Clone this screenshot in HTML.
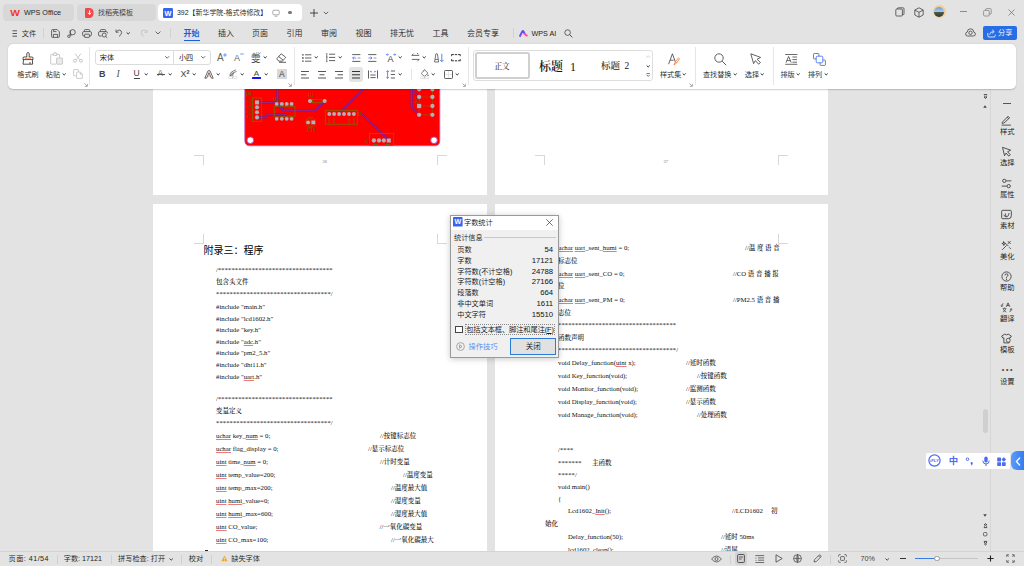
<!DOCTYPE html>
<html lang="zh-CN">
<head>
<meta charset="utf-8">
<title>WPS</title>
<style>
*{box-sizing:border-box;margin:0;padding:0}
html,body{width:1024px;height:566px;overflow:hidden}
body{position:relative;background:#e3e3e3;font-family:"Liberation Sans","Noto Sans CJK SC",sans-serif;font-size:8px;color:#222;font-weight:350}
.abs{position:absolute}
.t{position:absolute;white-space:nowrap;line-height:1}
svg{position:absolute;overflow:visible}
/* top */
#topbar{position:absolute;left:0;top:0;width:1024px;height:44px;background:#e3e3e3}
.tab{position:absolute;top:4px;height:17px;border-radius:4px;background:#d8d8d8}
.tab.active{background:#fff}
.menu{position:absolute;top:28.5px;font-size:8px;color:#222;line-height:10px;white-space:nowrap}
/* ribbon */
#ribbon{position:absolute;left:8px;top:44px;width:1008px;height:45px;background:#fff;border-radius:5px;box-shadow:0 0.5px 1.5px rgba(0,0,0,.2);z-index:3}
.rsep{position:absolute;top:3px;width:1px;height:38px;background:#e6e6e6}
.rl{position:absolute;font-size:7.1px;line-height:9px;color:#222;white-space:nowrap}
/* doc */
#doc{position:absolute;left:0;top:89px;width:990px;height:462px;background:#e3e3e3;overflow:hidden}
.page{position:absolute;background:#fff}
.code{position:absolute;white-space:pre;font-family:"Liberation Serif","Noto Serif CJK SC",serif;font-size:6.75px;line-height:8px;color:#111}
.code i{font-style:normal;text-decoration:underline;text-decoration-color:rgba(226,50,50,.65);text-decoration-thickness:0.8px;text-underline-offset:0.9px;text-decoration-skip-ink:none}
.cn{font-family:"Noto Serif CJK SC","Liberation Serif",serif;font-size:6.5px;font-weight:500;color:#000}
/* sidebar */
#side{position:absolute;left:990px;top:89px;width:34px;height:462px;background:#e3e3e3;border-left:1px solid #d6d6d6}
.sl{position:absolute;left:-0.8px;width:34px;text-align:center;font-size:7.3px;line-height:9px;color:#111}
/* status */
#status{position:absolute;left:0;top:551px;width:1024px;height:15px;background:#e3e3e3;border-top:1px solid #d4d4d4}
.st{position:absolute;top:2.2px;font-size:7.2px;line-height:9px;color:#222;white-space:nowrap}
/* dialog */
#dlg{z-index:5;position:absolute;left:450.2px;top:214.5px;width:109px;height:143.5px;background:#f0f0f0;border:1px solid #9a9a9a;box-shadow:0 1px 6px rgba(0,0,0,.22)}
.dr{position:absolute;left:6px;width:96px;font-size:7.2px;line-height:10px;color:#111}
.dr b{position:absolute;right:0;font-weight:normal;font-size:7.75px}
</style>
</head>
<body>
<div id="topbar">
  <!-- tabs -->
  <div class="tab" style="left:3px;width:71px"></div>
  <svg style="left:10px;top:8.5px" width="10" height="8" viewBox="0 0 10 8"><text x="5" y="7.4" font-size="9.6" font-weight="bold" fill="#f0392b" text-anchor="middle" font-family="Liberation Sans,sans-serif" textLength="9.6" lengthAdjust="spacingAndGlyphs">W</text></svg>
  <div class="t" style="left:24px;top:8.8px;font-size:7.2px;color:#222">WPS Office</div>

  <div class="tab" style="left:77px;width:79px"></div>
  <svg style="left:85px;top:8px" width="9" height="10" viewBox="0 0 9 10"><path d="M0 1.2 Q0 0 1.2 0 L4 0 Q8.6 0 8.6 5 Q8.6 10 4 10 L1.2 10 Q0 10 0 8.8Z" fill="#f04848"/><path d="M4.6 2.6 L4.6 5.6 M3.2 5 L4.6 6.6 L6 5" stroke="#fff" stroke-width="1" fill="none" stroke-linecap="round"/></svg>
  <div class="t" style="left:98px;top:9px;font-size:7px;color:#333">找稻壳模板</div>

  <div class="tab active" style="left:158px;width:144px"></div>
  <svg style="left:163px;top:8px" width="10" height="10" viewBox="0 0 10 10"><rect width="10" height="10" rx="1.2" fill="#3a63f0"/><text x="5" y="7.7" font-size="7.4" font-weight="bold" fill="#fff" text-anchor="middle" font-family="Liberation Sans,sans-serif">W</text></svg>
  <div class="t" style="left:177px;top:9.6px;font-size:6.95px;color:#222">392【新华学院-格式待修改】</div>
  <svg style="left:272px;top:9px" width="8" height="8" viewBox="0 0 8 8"><rect x="0.8" y="1.2" width="6.4" height="4.6" rx="1" fill="none" stroke="#888" stroke-width="0.7"/><path d="M2.6 7.2 H5.4" stroke="#888" stroke-width="0.7"/></svg>
  <div class="abs" style="left:288.4px;top:11px;width:3.4px;height:3.4px;border-radius:50%;background:#777"></div>
  <svg style="left:309px;top:8px" width="10" height="10" viewBox="0 0 10 10"><path d="M5 1 V9 M1 5 H9" stroke="#333" stroke-width="0.9" fill="none"/></svg>
  <svg style="left:323px;top:10.5px" width="6" height="4" viewBox="0 0 6 4"><path d="M0.8 0.8 L3 3 L5.2 0.8" stroke="#444" stroke-width="0.8" fill="none"/></svg>

  <!-- window controls -->
  <svg style="left:895px;top:7px" width="10" height="10" viewBox="0 0 10 10"><rect x="0.8" y="2" width="6.6" height="7" rx="1" fill="none" stroke="#444" stroke-width="0.8"/><path d="M2.4 2 V1.6 Q2.4 0.8 3.2 0.8 H8 Q9 0.8 9 1.8 V7 Q9 7.6 8.2 7.6 H7.4" fill="none" stroke="#444" stroke-width="0.8"/></svg>
  <svg style="left:914px;top:6.5px" width="10" height="11" viewBox="0 0 10 11"><path d="M5 0.8 L9.2 3 V8 L5 10.2 L0.8 8 V3Z M0.8 3 L5 5.3 L9.2 3 M5 5.3 V10.2" fill="none" stroke="#444" stroke-width="0.8" stroke-linejoin="round"/></svg>
  <div class="abs" style="left:932.5px;top:5px;width:13px;height:13px;border-radius:50%;background:#f0cf9a"></div>
  <div class="abs" style="left:934px;top:6.5px;width:10px;height:10px;border-radius:50%;background:linear-gradient(#6f9fd8 0%,#a9c6e8 45%,#4a5a48 55%,#2f3a30 100%)"></div>
  <div class="abs" style="left:960.3px;top:11.2px;width:7px;height:0.9px;background:#8c8c8c"></div>
  <svg style="left:983px;top:7.5px" width="9" height="9" viewBox="0 0 9 9"><rect x="0.6" y="2.4" width="5.6" height="5.6" rx="1" fill="none" stroke="#777" stroke-width="0.7"/><path d="M2.6 2.4 V1.6 Q2.6 0.6 3.6 0.6 H7.2 Q8.2 0.6 8.2 1.6 V5.2 Q8.2 6.2 7.2 6.2 H6.2" fill="none" stroke="#777" stroke-width="0.7"/></svg>
  <svg style="left:1008px;top:8.5px" width="7" height="7" viewBox="0 0 7 7"><path d="M0.5 0.5 L6.5 6.5 M6.5 0.5 L0.5 6.5" stroke="#666" stroke-width="0.7"/></svg>

  <!-- menu row -->
  <svg style="left:12px;top:30px" width="6" height="7" viewBox="0 0 6 7"><path d="M0.5 0.8 H5 M0.5 3.5 H5 M0.5 6.2 H5" stroke="#333" stroke-width="0.8"/></svg>
  <div class="menu" style="left:21.8px;font-size:7.2px">文件</div>
  <div class="abs" style="left:43px;top:28px;width:1px;height:10px;background:#d2d2d2"></div>
  <!-- save -->
  <svg style="left:51px;top:28.5px" width="9" height="9" viewBox="0 0 9 9"><path d="M0.6 1.4 Q0.6 0.6 1.4 0.6 H6.2 L8.4 2.8 V7.6 Q8.4 8.4 7.6 8.4 H1.4 Q0.6 8.4 0.6 7.6Z" fill="none" stroke="#444" stroke-width="0.8"/><path d="M2.4 8.2 V5.4 H6.6 V8.2 M2.6 0.8 V2.6 H5.4" fill="none" stroke="#444" stroke-width="0.8"/></svg>
  <!-- key-like -->
  <svg style="left:67px;top:28.5px" width="9" height="9" viewBox="0 0 9 9"><circle cx="5.7" cy="3.2" r="2.6" fill="none" stroke="#444" stroke-width="0.8"/><path d="M3.2 1.2 V7 Q3.2 8.5 1.9 8.5 Q0.6 8.5 0.6 7.3 Q0.6 6.1 1.9 6.1 H4.6" fill="none" stroke="#444" stroke-width="0.8"/></svg>
  <!-- print -->
  <svg style="left:82px;top:28.5px" width="10" height="9" viewBox="0 0 10 9"><path d="M2.4 2.6 V1.4 Q2.4 0.6 3.2 0.6 H6.8 Q7.6 0.6 7.6 1.4 V2.6" fill="none" stroke="#444" stroke-width="0.8"/><rect x="0.6" y="2.6" width="8.8" height="4.4" rx="1.2" fill="none" stroke="#444" stroke-width="0.8"/><rect x="2.6" y="5.2" width="4.8" height="3.2" rx="0.5" fill="#e3e3e3" stroke="#444" stroke-width="0.8"/></svg>
  <!-- preview -->
  <svg style="left:98px;top:28.5px" width="10" height="9" viewBox="0 0 10 9"><path d="M2.4 2.6 V1.4 Q2.4 0.6 3.2 0.6 H6.8 Q7.6 0.6 7.6 1.4 V2.6" fill="none" stroke="#444" stroke-width="0.8"/><path d="M3.6 7 H1.6 Q0.6 7 0.6 6 V3.8 Q0.6 2.6 1.8 2.6 H8.2 Q9.4 2.6 9.4 3.8 V4.4" fill="none" stroke="#444" stroke-width="0.8"/><circle cx="6.2" cy="6" r="2" fill="none" stroke="#444" stroke-width="0.8"/><path d="M7.7 7.5 L9.2 8.8" stroke="#444" stroke-width="0.8"/></svg>
  <!-- undo -->
  <svg style="left:115px;top:29px" width="8" height="8" viewBox="0 0 8 8"><path d="M1 0.6 V3.2 H3.6" fill="none" stroke="#444" stroke-width="0.8"/><path d="M1.2 3 Q2.6 0.9 4.6 1.1 Q6.6 1.4 6.6 3.6 Q6.6 5.6 4 7.4" fill="none" stroke="#444" stroke-width="0.8"/></svg>
  <svg style="left:126.3px;top:32px" width="4.4" height="3" viewBox="0 0 4.4 3"><path d="M0.95 0.75 L2.2 2 L3.45 0.75" stroke="#333" stroke-width="1" fill="none" stroke-linecap="round" stroke-linejoin="round"/></svg>
  <!-- redo (disabled) -->
  <svg style="left:140px;top:29px" width="8" height="8" viewBox="0 0 8 8"><path d="M7 0.8 V3.4 H4.4" fill="none" stroke="#c2c2c2" stroke-width="0.8"/><path d="M6.8 3.2 Q5.4 0.9 3.4 1.1 Q1.2 1.4 1.2 3.6 Q1.2 5.6 3.8 7.4" fill="none" stroke="#bbb" stroke-width="0.8"/></svg>
  <svg style="left:155px;top:31px" width="6" height="4" viewBox="0 0 6 4"><path d="M0.6 0.6 L3 3 L5.4 0.6" stroke="#444" stroke-width="0.8" fill="none"/></svg>
  <div class="abs" style="left:170px;top:28px;width:1px;height:10px;background:#d2d2d2"></div>

  <div class="menu" style="left:183.5px;color:#1d5fd6;font-weight:bold">开始</div>
  <div class="abs" style="left:184px;top:39.5px;width:16px;height:1.5px;background:#1d5fd6"></div>
  <div class="menu" style="left:218px">插入</div>
  <div class="menu" style="left:252px">页面</div>
  <div class="menu" style="left:286.5px">引用</div>
  <div class="menu" style="left:321px">审阅</div>
  <div class="menu" style="left:355.5px">视图</div>
  <div class="menu" style="left:390px">排无忧</div>
  <div class="menu" style="left:432.5px">工具</div>
  <div class="menu" style="left:467px">会员专享</div>
  <div class="abs" style="left:513px;top:28px;width:1px;height:10px;background:#d2d2d2"></div>
  <svg style="left:519.3px;top:29.6px" width="9" height="7" viewBox="0 0 9 7"><path d="M1 6 L3.3 1.4 Q3.9 0.4 4.5 1.4 L5.6 3.4" fill="none" stroke="#6a4af2" stroke-width="1.9" stroke-linecap="round" stroke-linejoin="round"/><path d="M5.2 3.8 L7.8 5.6" stroke="#f850a8" stroke-width="1.9" stroke-linecap="round"/></svg>
  <div class="menu" style="left:531.5px;font-size:7.2px">WPS AI</div>
  <svg style="left:564px;top:28.5px" width="9" height="9" viewBox="0 0 9 9"><circle cx="3.6" cy="3.6" r="2.8" fill="none" stroke="#444" stroke-width="0.8"/><path d="M5.8 5.8 L8.4 8.4" stroke="#444" stroke-width="0.9"/></svg>

  <!-- cloud + share -->
  <svg style="left:965px;top:28px" width="11" height="9" viewBox="0 0 11 9"><path d="M2.6 8 Q0.6 8 0.6 6 Q0.6 4.4 2.2 4.1 Q2.4 0.8 5.5 0.8 Q8.6 0.8 8.8 4.1 Q10.4 4.4 10.4 6 Q10.4 8 8.4 8Z" fill="none" stroke="#444" stroke-width="0.8"/><circle cx="5.5" cy="4.8" r="1.7" fill="none" stroke="#444" stroke-width="0.8"/></svg>
  <div class="abs" style="left:983px;top:25.5px;width:33.5px;height:14.5px;border-radius:2px;background:#266de6"></div>
  <svg style="left:987px;top:28.5px" width="9" height="9" viewBox="0 0 9 9"><path d="M0.8 4 V6.8 Q0.8 8 2 8 H7 Q8.2 8 8.2 6.8 V5.6" fill="none" stroke="#fff" stroke-width="0.8"/><path d="M2.6 5.8 Q3 2.6 6.6 2.6 M5.2 0.8 L7.2 2.6 L5.2 4.4" fill="none" stroke="#fff" stroke-width="0.8"/></svg>
  <div class="t" style="left:998px;top:29px;font-size:7.2px;color:#fff">分享</div>
</div>
<div id="ribbon">
<svg style="left:14px;top:8px" width="12" height="13" viewBox="0 0 12 13"><path d="M4.8 5 V1.6 Q4.8 0.6 6 0.6 Q7.2 0.6 7.2 1.6 V5 H10 Q11 5 11 6 V7.6 H1 V6 Q1 5 2 5Z" fill="none" stroke="#333" stroke-width="0.85" stroke-linejoin="round"/><path d="M1.6 7.6 L1 12.2 H10.6 L10.4 7.6 M8 12 V10" fill="none" stroke="#333" stroke-width="0.85" stroke-linejoin="round"/><path d="M3 6.3 H9" stroke="#f07030" stroke-width="0.8"/></svg>
<div class="rl" style="left:9.3px;top:26.5px">格式刷</div>
<svg style="left:42px;top:8px" width="13" height="13" viewBox="0 0 13 13"><path d="M3.2 2.4 H1.2 Q0.7 2.4 0.7 2.9 V11.6 Q0.7 12.1 1.2 12.1 H6 M7 2.4 H9 Q9.5 2.4 9.5 2.9 V5.4" fill="none" stroke="#c0c0c0" stroke-width="0.85"/><path d="M3.2 3.4 V1.6 H4.2 V0.7 H6 V1.6 H7 V3.4Z" fill="none" stroke="#c0c0c0" stroke-width="0.85" stroke-linejoin="round"/><rect x="6.6" y="6" width="5.8" height="6.2" rx="0.4" fill="#ececec" stroke="#c0c0c0" stroke-width="0.85"/></svg>
<div class="rl" style="left:37.8px;top:26.5px">粘贴</div>
<svg style="left:53.599999999999994px;top:29.3px" width="4.4" height="3" viewBox="0 0 4.4 3"><path d="M0.95 0.75 L2.2 2 L3.45 0.75" stroke="#333" stroke-width="1" fill="none" stroke-linecap="round" stroke-linejoin="round"/></svg>
<svg style="left:65px;top:8.5px" width="10" height="10" viewBox="0 0 10 10"><path d="M2 0.6 L6.8 6.8 M8 0.6 L3.2 6.8" stroke="#bdbdbd" stroke-width="0.8" fill="none"/><circle cx="2" cy="7.8" r="1.5" fill="none" stroke="#bdbdbd" stroke-width="0.8"/><circle cx="8" cy="7.8" r="1.5" fill="none" stroke="#bdbdbd" stroke-width="0.8"/></svg>
<svg style="left:65px;top:25px" width="10" height="10" viewBox="0 0 10 10"><path d="M3.2 6.8 H1 Q0.6 6.8 0.6 6.4 V1 Q0.6 0.6 1 0.6 H5 Q5.4 0.6 5.4 1 V2.6" fill="none" stroke="#c0c0c0" stroke-width="0.8"/><path d="M3.6 3.4 Q3.6 3 4 3 H7.2 L9.4 5.2 V9 Q9.4 9.4 9 9.4 H4 Q3.6 9.4 3.6 9Z M7.2 3 V5.2 H9.4" fill="none" stroke="#c0c0c0" stroke-width="0.8" stroke-linejoin="round"/></svg>
<svg style="left:76.2px;top:39.2px" width="4" height="4" viewBox="0 0 4 4"><path d="M0.4 0.4 L3 3 M3.4 0.8 V3.4 H0.8" stroke="#777" stroke-width="0.6" fill="none"/></svg>
<div class="rsep" style="left:81px"></div>
<div class="abs" style="left:87px;top:6px;width:115.5px;height:14.5px;border:1px solid #dcdcdc;border-radius:3px"></div>
<div class="abs" style="left:165.3px;top:6.5px;width:1px;height:13.5px;background:#dcdcdc"></div>
<div class="rl" style="left:91.8px;top:9.5px;color:#222;font-weight:400">宋体</div>
<svg style="left:157.3px;top:12.3px" width="4.4" height="3" viewBox="0 0 4.4 3"><path d="M0.5 0.5 L2.2 2.2 L3.9 0.5" stroke="#666" stroke-width="0.95" fill="none" stroke-linecap="round" stroke-linejoin="round"/></svg>
<div class="rl" style="left:171px;top:9.5px;color:#222;font-weight:400">小四</div>
<svg style="left:192.8px;top:12.3px" width="4.4" height="3" viewBox="0 0 4.4 3"><path d="M0.5 0.5 L2.2 2.2 L3.9 0.5" stroke="#666" stroke-width="0.95" fill="none" stroke-linecap="round" stroke-linejoin="round"/></svg>
<div class="rl" style="left:209px;top:8px;font-size:10px;line-height:11px;color:#666">A</div>
<svg style="left:214.5px;top:8.5px" width="4" height="4" viewBox="0 0 4 4"><path d="M2 0.2 V3.8 M0.2 2 H3.8" stroke="#3a6df0" stroke-width="0.7"/></svg>
<div class="rl" style="left:226px;top:9px;font-size:9px;line-height:10px;color:#666">A</div>
<svg style="left:231.5px;top:9px" width="4" height="2" viewBox="0 0 4 2"><path d="M0.2 1 H3.8" stroke="#3a6df0" stroke-width="0.7"/></svg>
<div class="rl" style="left:243px;top:9.8px;font-size:9.5px;line-height:10px;color:#333">雯</div>
<div class="abs" style="left:243.5px;top:8.6px;width:8.5px;height:1.4px;background:#fff"></div>
<svg style="left:243.5px;top:7.8px" width="9" height="3" viewBox="0 0 9 3"><path d="M0.5 2.2 Q2 0.4 3.4 1.8 M4 1 H5.4 M6 0.6 Q7.4 2.4 8.6 0.8" stroke="#444" stroke-width="0.6" fill="none"/></svg>
<svg style="left:255.3px;top:12.3px" width="4.4" height="3" viewBox="0 0 4.4 3"><path d="M0.95 0.75 L2.2 2 L3.45 0.75" stroke="#333" stroke-width="1" fill="none" stroke-linecap="round" stroke-linejoin="round"/></svg>
<svg style="left:267.5px;top:8.5px" width="11" height="10" viewBox="0 0 11 10"><path d="M5.2 0.8 L9.4 4 Q9.9 4.5 9.4 5 L6.2 8.2 H3 L1 6.4 Q0.5 5.9 1 5.4Z M2.8 3.6 L7.2 7.2" fill="none" stroke="#444" stroke-width="0.85" stroke-linejoin="round"/><path d="M3 9.3 H10" stroke="#444" stroke-width="0.85"/></svg>
<div class="rl" style="left:91px;top:25px;font-size:9px;line-height:10px;font-weight:bold;color:#444">B</div>
<div class="rl" style="left:108.5px;top:25px;font-size:9.5px;line-height:10px;font-style:italic;font-family:'Liberation Serif',serif;color:#555">I</div>
<div class="rl" style="left:125.5px;top:25.2px;font-size:8.5px;line-height:9px;color:#444">U</div>
<div class="abs" style="left:125.5px;top:33.6px;width:6.5px;height:0.9px;background:#444"></div>
<svg style="left:135.8px;top:29.3px" width="4.4" height="3" viewBox="0 0 4.4 3"><path d="M0.95 0.75 L2.2 2 L3.45 0.75" stroke="#333" stroke-width="1" fill="none" stroke-linecap="round" stroke-linejoin="round"/></svg>
<div class="rl" style="left:149.5px;top:25.2px;font-size:8.5px;line-height:9px;color:#666">A</div>
<div class="abs" style="left:148.5px;top:30.2px;width:8px;height:0.8px;background:#555"></div>
<svg style="left:159.8px;top:29.3px" width="4.4" height="3" viewBox="0 0 4.4 3"><path d="M0.95 0.75 L2.2 2 L3.45 0.75" stroke="#333" stroke-width="1" fill="none" stroke-linecap="round" stroke-linejoin="round"/></svg>
<div class="rl" style="left:172.5px;top:25.2px;font-size:9px;line-height:10px;color:#444">X<span style="font-size:5.5px;position:relative;top:-3px;font-weight:bold">2</span></div>
<svg style="left:183.8px;top:29.3px" width="4.4" height="3" viewBox="0 0 4.4 3"><path d="M0.95 0.75 L2.2 2 L3.45 0.75" stroke="#333" stroke-width="1" fill="none" stroke-linecap="round" stroke-linejoin="round"/></svg>
<svg style="left:196px;top:25.5px" width="10" height="9" viewBox="0 0 10 9"><path d="M0.8 8.2 L4 0.8 H6 L9.2 8.2 H7.4 L5 2.6 L2.6 8.2Z" fill="#fff" stroke="#444" stroke-width="0.8" stroke-linejoin="round"/><path d="M4.2 6.6 L5 4.4 L5.8 6.6Z" fill="#f07030"/></svg>
<svg style="left:207.8px;top:29.3px" width="4.4" height="3" viewBox="0 0 4.4 3"><path d="M0.95 0.75 L2.2 2 L3.45 0.75" stroke="#333" stroke-width="1" fill="none" stroke-linecap="round" stroke-linejoin="round"/></svg>
<svg style="left:220px;top:25px" width="10" height="10" viewBox="0 0 10 10"><path d="M1.6 6.6 L3.4 3 L7.8 0.8 M3.6 4.6 L8.6 2.4 M2 6.8 L5.4 4.2 L4.6 6.8Z" fill="none" stroke="#555" stroke-width="0.75" stroke-linejoin="round"/><rect x="0.6" y="7.6" width="8.4" height="1.9" rx="0.4" fill="#fff" stroke="#ccc" stroke-width="0.5"/><path d="M4 9.2 L5.6 7.9" stroke="#f04040" stroke-width="0.5"/></svg>
<svg style="left:231.8px;top:29.3px" width="4.4" height="3" viewBox="0 0 4.4 3"><path d="M0.95 0.75 L2.2 2 L3.45 0.75" stroke="#333" stroke-width="1" fill="none" stroke-linecap="round" stroke-linejoin="round"/></svg>
<div class="rl" style="left:245.8px;top:24.6px;font-size:8px;line-height:9px;color:#444">A</div>
<div class="abs" style="left:244px;top:32.7px;width:9px;height:2px;background:#1414f0;border-radius:0.5px"></div>
<svg style="left:255.8px;top:29.3px" width="4.4" height="3" viewBox="0 0 4.4 3"><path d="M0.95 0.75 L2.2 2 L3.45 0.75" stroke="#333" stroke-width="1" fill="none" stroke-linecap="round" stroke-linejoin="round"/></svg>
<div class="abs" style="left:269px;top:25px;width:9.5px;height:10px;background:#d9d9d9"></div>
<div class="rl" style="left:270.9px;top:25.8px;font-size:8.5px;line-height:9px;color:#444">A</div>
<svg style="left:279.7px;top:39.2px" width="4" height="4" viewBox="0 0 4 4"><path d="M0.4 0.4 L3 3 M3.4 0.8 V3.4 H0.8" stroke="#777" stroke-width="0.6" fill="none"/></svg>
<div class="rsep" style="left:285.5px"></div>
<svg style="left:294px;top:9.7px" width="10" height="8" viewBox="0 0 10 8"><path d="M0.2 0.8 H1.6 M0.2 4 H1.6 M0.2 7.2 H1.6" stroke="#333" stroke-width="1.3"/><path d="M3 0.8 H9.4 M3 4 H9.4 M3 7.2 H9.4" stroke="#444" stroke-width="0.85"/></svg>
<svg style="left:305.8px;top:12.3px" width="4.4" height="3" viewBox="0 0 4.4 3"><path d="M0.95 0.75 L2.2 2 L3.45 0.75" stroke="#333" stroke-width="1" fill="none" stroke-linecap="round" stroke-linejoin="round"/></svg>
<svg style="left:318px;top:9.3px" width="10" height="9" viewBox="0 0 10 9"><path d="M0.8 0.4 V8.6 M0.2 1 L0.8 0.4 M0.2 4 H1.4 M0.2 8.6 H1.4" stroke="#444" stroke-width="0.7" fill="none"/><path d="M3 1.2 H9.2 M3 4.4 H9.2 M3 7.6 H9.2" stroke="#444" stroke-width="0.85"/></svg>
<svg style="left:329.8px;top:12.3px" width="4.4" height="3" viewBox="0 0 4.4 3"><path d="M0.95 0.75 L2.2 2 L3.45 0.75" stroke="#333" stroke-width="1" fill="none" stroke-linecap="round" stroke-linejoin="round"/></svg>
<svg style="left:343.8px;top:9.7px" width="9" height="8" viewBox="0 0 9 8"><path d="M0.2 0.6 H8.4 M0.2 7.4 H8.4" stroke="#444" stroke-width="0.85"/><path d="M5.6 4 H8.4" stroke="#888" stroke-width="0.85"/><path d="M0.6 4 H4.2 M2 2.6 L0.6 4 L2 5.4" stroke="#3a6df0" stroke-width="0.75" fill="none"/></svg>
<svg style="left:360px;top:9.7px" width="9" height="8" viewBox="0 0 9 8"><path d="M0.2 0.6 H8.4 M0.2 7.4 H8.4" stroke="#444" stroke-width="0.85"/><path d="M5.6 4 H8.4" stroke="#888" stroke-width="0.85"/><path d="M0.4 4 H4 M2.6 2.6 L4 4 L2.6 5.4" stroke="#3a6df0" stroke-width="0.75" fill="none"/></svg>
<div class="rl" style="left:379.6px;top:9.6px;font-size:9px;line-height:10px;color:#444">A</div>
<svg style="left:378px;top:8.6px" width="10" height="4" viewBox="0 0 10 4"><path d="M0.4 1.6 H2.8 M1.4 0.5 L0.4 1.6 L1.4 2.7 M7.2 1.6 H9.6 M8.6 0.5 L9.6 1.6 L8.6 2.7" stroke="#3a6df0" stroke-width="0.7" fill="none"/></svg>
<svg style="left:389.8px;top:12.3px" width="4.4" height="3" viewBox="0 0 4.4 3"><path d="M0.95 0.75 L2.2 2 L3.45 0.75" stroke="#333" stroke-width="1" fill="none" stroke-linecap="round" stroke-linejoin="round"/></svg>
<svg style="left:402.5px;top:9px" width="9" height="9" viewBox="0 0 9 9"><path d="M8.2 2.4 H0.8 L2.6 0.6 M0.8 6.4 H8.2 L6.4 8.2 M6 0.4 L7.4 1" stroke="#444" stroke-width="0.8" fill="none" stroke-linejoin="round"/></svg>
<svg style="left:413.8px;top:12.3px" width="4.4" height="3" viewBox="0 0 4.4 3"><path d="M0.95 0.75 L2.2 2 L3.45 0.75" stroke="#333" stroke-width="1" fill="none" stroke-linecap="round" stroke-linejoin="round"/></svg>
<svg style="left:426px;top:9.2px" width="11" height="10" viewBox="0 0 11 10"><path d="M0.6 9 H4.6 L3.6 2 Q3.6 0.6 2.6 0.6 Q1.7 0.6 1.7 2Z M1.2 6.4 H4" fill="none" stroke="#444" stroke-width="0.75" stroke-linejoin="round"/><path d="M7.8 0.8 V8.6 M6 6.8 L7.8 8.6 L9.6 6.8" fill="none" stroke="#3a6df0" stroke-width="0.85"/></svg>
<svg style="left:443px;top:9.6px" width="10" height="8" viewBox="0 0 10 8"><path d="M0.5 0.6 H9.3 M0.5 6.8 H9.3" stroke="#333" stroke-width="1" stroke-dasharray="2.4 0.9" fill="none"/><path d="M0.6 0.4 V2.2 M0.6 5 V7 M9.2 0.4 V2.2 M9.2 5 V7" stroke="#333" stroke-width="0.9"/></svg>
<div class="rsep" style="left:459.5px"></div>
<svg style="left:293px;top:26.5px" width="10" height="10" viewBox="0 0 10 10"><path d="M0 0.5 H8 M0 3.75 H5.4 M0 7.0 H8 " stroke="#444" stroke-width="0.9" fill="none"/></svg>
<svg style="left:310px;top:26.5px" width="10" height="10" viewBox="0 0 10 10"><path d="M0 0.5 H8 M1.5 3.75 H6.5 M0 7.0 H8 " stroke="#444" stroke-width="0.9" fill="none"/></svg>
<svg style="left:327px;top:26.5px" width="10" height="10" viewBox="0 0 10 10"><path d="M0 0.5 H8 M2.6 3.75 H8.0 M0 7.0 H8 " stroke="#444" stroke-width="0.9" fill="none"/></svg>
<div class="abs" style="left:341px;top:23px;width:14px;height:14.5px;border-radius:2.5px;background:#e4e4e4"></div>
<svg style="left:344px;top:26.5px" width="10" height="10" viewBox="0 0 10 10"><path d="M0 0.5 H8 M0 3.75 H8 M0 7.0 H8 " stroke="#333" stroke-width="1" fill="none"/></svg>
<svg style="left:360px;top:25.5px" width="10" height="9" viewBox="0 0 10 9"><path d="M0.5 0.4 V8.6 M9.5 0.4 V8.6" stroke="#444" stroke-width="0.85"/><path d="M2.4 5 H7.6 M2.4 7.6 H7.6" stroke="#444" stroke-width="0.85"/><path d="M2.4 1.6 H4 M3.2 0.8 L2.4 1.6 L3.2 2.4 M6 1.6 H7.6 M6.8 0.8 L7.6 1.6 L6.8 2.4" stroke="#3a6df0" stroke-width="0.65" fill="none"/></svg>
<svg style="left:378px;top:25.5px" width="10" height="9" viewBox="0 0 10 9"><path d="M1.6 0.6 V8.4 M0.4 1.8 L1.6 0.6 L2.8 1.8 M0.4 7.2 L1.6 8.4 L2.8 7.2" stroke="#3a6df0" stroke-width="0.8" fill="none"/><path d="M4.8 1 H9 M4.8 4.5 H9 M4.8 8 H9" stroke="#444" stroke-width="0.85"/></svg>
<svg style="left:389.8px;top:29.3px" width="4.4" height="3" viewBox="0 0 4.4 3"><path d="M0.95 0.75 L2.2 2 L3.45 0.75" stroke="#333" stroke-width="1" fill="none" stroke-linecap="round" stroke-linejoin="round"/></svg>
<div class="abs" style="left:403px;top:25px;width:1px;height:11px;background:#e4e4e4"></div>
<svg style="left:411.5px;top:25px" width="10" height="10" viewBox="0 0 10 10"><path d="M4.6 0.8 L8 4.2 L5 7 Q4.4 7.4 3.8 7 L1.8 5 Q1.4 4.4 1.8 3.8Z M3.2 2.2 L4.6 0.8" fill="none" stroke="#555" stroke-width="0.75" stroke-linejoin="round"/><circle cx="8" cy="6.2" r="0.7" fill="#555"/><rect x="0.4" y="7.8" width="8.6" height="1.8" rx="0.4" fill="#fff" stroke="#ccc" stroke-width="0.5"/><path d="M3.8 9.4 L5.4 8" stroke="#f04040" stroke-width="0.5"/></svg>
<svg style="left:423.3px;top:29.3px" width="4.4" height="3" viewBox="0 0 4.4 3"><path d="M0.95 0.75 L2.2 2 L3.45 0.75" stroke="#333" stroke-width="1" fill="none" stroke-linecap="round" stroke-linejoin="round"/></svg>
<svg style="left:435.5px;top:25.8px" width="9" height="9" viewBox="0 0 9 9"><rect x="0.5" y="0.5" width="8" height="8" rx="0.8" fill="none" stroke="#444" stroke-width="0.85"/><path d="M4.5 1 V8 M1 4.5 H8" stroke="#ccc" stroke-width="0.5"/></svg>
<svg style="left:447.3px;top:29.3px" width="4.4" height="3" viewBox="0 0 4.4 3"><path d="M0.95 0.75 L2.2 2 L3.45 0.75" stroke="#333" stroke-width="1" fill="none" stroke-linecap="round" stroke-linejoin="round"/></svg>
<svg style="left:454.2px;top:39.2px" width="4" height="4" viewBox="0 0 4 4"><path d="M0.4 0.4 L3 3 M3.4 0.8 V3.4 H0.8" stroke="#777" stroke-width="0.6" fill="none"/></svg>
<div class="abs" style="left:465px;top:6px;width:180px;height:30.5px;border:1px solid #dedede;border-radius:3px;background:#fff"></div>
<div class="abs" style="left:466.5px;top:8px;width:55.5px;height:26.5px;border:2px solid #d0d0d0;border-radius:2.5px;background:#fff"></div>
<div class="rl" style="left:486.5px;top:17px;font-family:'Noto Serif CJK SC',serif;font-size:7.6px;line-height:9px;color:#444;font-weight:500">正文</div>
<div class="rl" style="left:531px;top:15.6px;font-family:'Liberation Serif','Noto Serif CJK SC',serif;font-size:12px;line-height:15px;color:#111;font-weight:600">标题<span style="margin-left:7px;font-weight:400">1</span></div>
<div class="rl" style="left:593px;top:16.2px;font-family:'Liberation Serif','Noto Serif CJK SC',serif;font-size:9.5px;line-height:12px;color:#222;font-weight:500">标题<span style="margin-left:4.5px">2</span></div>
<svg style="left:637.5999999999999px;top:11.0px" width="4.4" height="3" viewBox="0 0 4.4 3"><path d="M0.5 2.4 L2.2 0.7 L3.9 2.4" stroke="#ccc" stroke-width="0.95" fill="none" stroke-linecap="round" stroke-linejoin="round"/></svg>
<svg style="left:637.5999999999999px;top:21.3px" width="4.4" height="3" viewBox="0 0 4.4 3"><path d="M0.95 0.75 L2.2 2 L3.45 0.75" stroke="#333" stroke-width="1" fill="none" stroke-linecap="round" stroke-linejoin="round"/></svg>
<svg style="left:637.6px;top:29px" width="4.4" height="4" viewBox="0 0 4.4 4"><path d="M0.5 0.5 H3.9" stroke="#444" stroke-width="0.7"/><path d="M0.6 1.8 L2.2 3.4 L3.8 1.8" stroke="#444" stroke-width="0.8" fill="none"/></svg>
<svg style="left:660px;top:8.5px" width="12" height="13" viewBox="0 0 12 13"><path d="M0.6 11.2 L4.4 0.8 L7.4 9 M2.2 7.2 H5.6" fill="none" stroke="#444" stroke-width="0.85" stroke-linejoin="round"/><path d="M10.6 4.8 L11.5 5.7 L8.7 9.8 L7.3 8.8Z" fill="#fff" stroke="#f07030" stroke-width="0.75" stroke-linejoin="round"/><path d="M7.3 8.8 L8.7 9.8 L6 12Z" fill="#fff" stroke="#f07030" stroke-width="0.75" stroke-linejoin="round"/></svg>
<div class="rl" style="left:652px;top:26.5px">样式集</div>
<svg style="left:674.3px;top:29.3px" width="4.4" height="3" viewBox="0 0 4.4 3"><path d="M0.95 0.75 L2.2 2 L3.45 0.75" stroke="#333" stroke-width="1" fill="none" stroke-linecap="round" stroke-linejoin="round"/></svg>
<svg style="left:681.2px;top:39.2px" width="4" height="4" viewBox="0 0 4 4"><path d="M0.4 0.4 L3 3 M3.4 0.8 V3.4 H0.8" stroke="#777" stroke-width="0.6" fill="none"/></svg>
<div class="rsep" style="left:687px"></div>
<svg style="left:705.5px;top:8.5px" width="13" height="13" viewBox="0 0 13 13"><circle cx="5" cy="5" r="4.2" fill="none" stroke="#444" stroke-width="0.85"/><path d="M8.2 8.2 L12.2 12.2" stroke="#444" stroke-width="0.9"/></svg>
<div class="rl" style="left:695px;top:26.5px">查找替换</div>
<svg style="left:725.0px;top:29.3px" width="4.4" height="3" viewBox="0 0 4.4 3"><path d="M0.95 0.75 L2.2 2 L3.45 0.75" stroke="#333" stroke-width="1" fill="none" stroke-linecap="round" stroke-linejoin="round"/></svg>
<svg style="left:741.5px;top:8.5px" width="12" height="12" viewBox="0 0 12 12"><path d="M0.8 0.8 L10.6 4.4 L7.2 6.2 L10.4 9.6 L8.6 11.2 L5.4 7.6 L3.6 10.6Z" fill="none" stroke="#444" stroke-width="0.85" stroke-linejoin="round"/></svg>
<div class="rl" style="left:736.8px;top:26.5px">选择</div>
<svg style="left:752.3px;top:29.3px" width="4.4" height="3" viewBox="0 0 4.4 3"><path d="M0.95 0.75 L2.2 2 L3.45 0.75" stroke="#333" stroke-width="1" fill="none" stroke-linecap="round" stroke-linejoin="round"/></svg>
<div class="rsep" style="left:765px"></div>
<svg style="left:777px;top:9.5px" width="13" height="11" viewBox="0 0 13 11"><path d="M0.2 0.5 H12.4 M0.2 10.3 H12.4" stroke="#444" stroke-width="0.8"/><path d="M1 8.6 L3.6 2.4 L6.2 8.6 M1.9 6.6 H5.3" stroke="#444" stroke-width="0.8" fill="none"/><path d="M7.4 3 H12 M7.4 5.6 H12 M7.4 8.2 H12" stroke="#444" stroke-width="0.8"/></svg>
<div class="rl" style="left:772.5px;top:26.5px">排版</div>
<svg style="left:788.3px;top:29.3px" width="4.4" height="3" viewBox="0 0 4.4 3"><path d="M0.95 0.75 L2.2 2 L3.45 0.75" stroke="#333" stroke-width="1" fill="none" stroke-linecap="round" stroke-linejoin="round"/></svg>
<svg style="left:804.5px;top:8.5px" width="13" height="13" viewBox="0 0 13 13"><rect x="0.5" y="0.5" width="5.4" height="5.4" rx="0.8" fill="none" stroke="#555" stroke-width="0.75"/><rect x="7" y="7" width="5.4" height="5.4" rx="0.8" fill="none" stroke="#555" stroke-width="0.75"/><rect x="3.2" y="3.2" width="6.6" height="6.6" rx="1" fill="#fff" stroke="#4a78f0" stroke-width="0.9"/></svg>
<div class="rl" style="left:800px;top:26.5px">排列</div>
<svg style="left:815.8px;top:29.3px" width="4.4" height="3" viewBox="0 0 4.4 3"><path d="M0.95 0.75 L2.2 2 L3.45 0.75" stroke="#333" stroke-width="1" fill="none" stroke-linecap="round" stroke-linejoin="round"/></svg>
</div>
<div id="doc">
<div class="page" style="left:153px;top:0;width:333.5px;height:106px"></div>
<div class="page" style="left:494.5px;top:0;width:333.5px;height:106px"></div>
<div class="page" style="left:153px;top:114.5px;width:333.5px;height:360px"></div>
<div class="page" style="left:494.5px;top:114.5px;width:333.5px;height:360px"></div>
<div class="abs" style="left:194.0px;top:66px;width:10px;height:9.5px;border-top:1px solid #d8d8d8;border-right:1px solid #d8d8d8"></div>
<div class="abs" style="left:436.5px;top:66px;width:10px;height:9.5px;border-top:1px solid #d8d8d8;border-left:1px solid #d8d8d8"></div>
<div class="abs" style="left:535.0px;top:66px;width:10px;height:9.5px;border-top:1px solid #d8d8d8;border-right:1px solid #d8d8d8"></div>
<div class="abs" style="left:777.5px;top:66px;width:10px;height:9.5px;border-top:1px solid #d8d8d8;border-left:1px solid #d8d8d8"></div>
<div class="abs" style="left:194.0px;top:144.5px;width:10px;height:10px;border-bottom:1px solid #d8d8d8;border-right:1px solid #d8d8d8"></div>
<div class="abs" style="left:436.5px;top:144.5px;width:10px;height:10px;border-bottom:1px solid #d8d8d8;border-left:1px solid #d8d8d8"></div>
<div class="abs" style="left:535.0px;top:144.5px;width:10px;height:10px;border-bottom:1px solid #d8d8d8;border-right:1px solid #d8d8d8"></div>
<div class="abs" style="left:777.5px;top:144.5px;width:10px;height:10px;border-bottom:1px solid #d8d8d8;border-left:1px solid #d8d8d8"></div>
<div class="t" style="left:322.6px;top:70.8px;font-family:'Liberation Serif',serif;font-size:4.5px;color:#777">36</div>
<div class="t" style="left:663.6px;top:70.8px;font-family:'Liberation Serif',serif;font-size:4.5px;color:#777">37</div>
<svg style="left:0;top:0" width="990" height="60" viewBox="0 0 990 60">
<path d="M244.8 -2 V51.5 Q244.8 56.8 250 56.8 H434.5 Q439.8 56.8 439.8 51.5 V-2Z" fill="#fe0000" stroke="#b060d0" stroke-width="0.8"/>
<circle cx="250.3" cy="51.2" r="3.3" fill="#fff" stroke="#a050c8" stroke-width="0.9"/>
<circle cx="434" cy="51.2" r="3.3" fill="#fff" stroke="#a050c8" stroke-width="0.9"/>
<path d="M257 13.4 L274 13.4 L277 15" fill="none" stroke="#5a1eb0" stroke-width="2.1" stroke-linejoin="round" opacity="0.88"/><path d="M257 13.4 L274 13.4 L277 15" fill="none" stroke="#f03060" stroke-width="0.55" stroke-linejoin="round" opacity="0.8"/>
<path d="M277.3 -1 L277.3 14" fill="none" stroke="#5a1eb0" stroke-width="2.1" stroke-linejoin="round" opacity="0.88"/><path d="M277.3 -1 L277.3 14" fill="none" stroke="#f03060" stroke-width="0.55" stroke-linejoin="round" opacity="0.8"/>
<path d="M277 15 L283.5 21.3 L315.5 21.3 L324.7 12" fill="none" stroke="#5a1eb0" stroke-width="2.1" stroke-linejoin="round" opacity="0.88"/><path d="M277 15 L283.5 21.3 L315.5 21.3 L324.7 12" fill="none" stroke="#f03060" stroke-width="0.55" stroke-linejoin="round" opacity="0.8"/>
<path d="M257 28.4 L265 28.4 L268 25.6 L285 25.6 L287 29" fill="none" stroke="#5a1eb0" stroke-width="2.1" stroke-linejoin="round" opacity="0.88"/><path d="M257 28.4 L265 28.4 L268 25.6 L285 25.6 L287 29" fill="none" stroke="#f03060" stroke-width="0.55" stroke-linejoin="round" opacity="0.8"/>
<path d="M276 25.8 L286 25.8" fill="none" stroke="#5a1eb0" stroke-width="2.4" stroke-linejoin="round" opacity="0.85"/><path d="M276 25.8 L286 25.8" fill="none" stroke="#f03060" stroke-width="0.55" stroke-linejoin="round" opacity="0.8"/>
<path d="M364.5 -1 L341.5 22 L339.5 24.5" fill="none" stroke="#5a1eb0" stroke-width="2.1" stroke-linejoin="round" opacity="0.88"/><path d="M364.5 -1 L341.5 22 L339.5 24.5" fill="none" stroke="#f03060" stroke-width="0.55" stroke-linejoin="round" opacity="0.8"/>
<path d="M361 24 L388.6 51" fill="none" stroke="#5a1eb0" stroke-width="2.1" stroke-linejoin="round" opacity="0.88"/><path d="M361 24 L388.6 51" fill="none" stroke="#f03060" stroke-width="0.55" stroke-linejoin="round" opacity="0.8"/>
<path d="M411.6 -1 L411.6 18 L419 26" fill="none" stroke="#5a1eb0" stroke-width="2.1" stroke-linejoin="round" opacity="0.88"/><path d="M411.6 -1 L411.6 18 L419 26" fill="none" stroke="#f03060" stroke-width="0.55" stroke-linejoin="round" opacity="0.8"/>
<path d="M413.5 -1 L413.5 2.5 L419 8" fill="none" stroke="#5a1eb0" stroke-width="2.1" stroke-linejoin="round" opacity="0.88"/><path d="M413.5 -1 L413.5 2.5 L419 8" fill="none" stroke="#f03060" stroke-width="0.55" stroke-linejoin="round" opacity="0.8"/>
<rect x="252.4" y="8.9" width="9.3" height="23.4" fill="none" stroke="#7a6a00" stroke-width="0.8"/>
<rect x="255.0" y="11.4" width="4.0" height="4.0" fill="#b0b0b6"/>
<circle cx="257" cy="18.2" r="2.05" fill="#b0b0b6"/>
<circle cx="257" cy="23.3" r="2.05" fill="#b0b0b6"/>
<circle cx="257" cy="28.4" r="2.05" fill="#b0b0b6"/>
<text x="245.8" y="7.2" font-size="4.7" fill="#6a5a00" font-weight="bold" font-family="Liberation Sans,sans-serif">U4</text>
<text x="246.8" y="14.3" font-size="2.6" fill="#6a5a00" font-weight="bold" font-family="Liberation Sans,sans-serif">VCC</text>
<text x="246.8" y="19.1" font-size="2.6" fill="#6a5a00" font-weight="bold" font-family="Liberation Sans,sans-serif">GND</text>
<text x="246.8" y="24.2" font-size="2.6" fill="#6a5a00" font-weight="bold" font-family="Liberation Sans,sans-serif">DO</text>
<text x="246.8" y="29.3" font-size="2.6" fill="#6a5a00" font-weight="bold" font-family="Liberation Sans,sans-serif">AO</text>
<rect x="274.2" y="17.3" width="20.8" height="10.0" fill="none" stroke="#7a6a00" stroke-width="0.8"/>
<path d="M274.2 20.8 Q276.4 22.3 274.2 23.8" fill="none" stroke="#7a6a00" stroke-width="0.8"/>
<circle cx="276.7" cy="14.9" r="1.95" fill="#b0b0b6"/>
<circle cx="276.7" cy="29.8" r="1.9" fill="#b0b0b6"/>
<circle cx="281.8" cy="14.9" r="1.95" fill="#b0b0b6"/>
<circle cx="281.8" cy="29.8" r="1.9" fill="#b0b0b6"/>
<circle cx="286.7" cy="14.9" r="1.95" fill="#b0b0b6"/>
<circle cx="286.7" cy="29.8" r="1.9" fill="#b0b0b6"/>
<circle cx="291.6" cy="14.9" r="1.95" fill="#b0b0b6"/>
<circle cx="291.6" cy="29.8" r="1.9" fill="#b0b0b6"/>
<text x="273" y="12" font-size="4.7" fill="#6a5a00" font-weight="bold" font-family="Liberation Sans,sans-serif">U1</text>
<text x="308.2" y="8.4" font-size="4.5" fill="#6a5a00" font-weight="bold" font-family="Liberation Sans,sans-serif">R2</text>
<rect x="312.4" y="10.5" width="9.6" height="3.2" fill="none" stroke="#7a6a00" stroke-width="0.8"/>
<circle cx="310" cy="12" r="2.05" fill="#b0b0b6"/>
<circle cx="324.7" cy="12" r="2.05" fill="#b0b0b6"/>
<circle cx="310.6" cy="33.400000000000006" r="4.9" fill="none" stroke="#7a6a00" stroke-width="0.8"/>
<path d="M310.8 28.6 L310.8 38.2" stroke="#7a6a00" stroke-width="0.6" fill="none"/>
<circle cx="308.1" cy="33.4" r="1.95" fill="#b0b0b6"/>
<rect x="311.4" y="31.5" width="3.8" height="3.8" fill="#b0b0b6"/>
<text x="307" y="42.6" font-size="4.5" fill="#6a5a00" font-weight="bold" font-family="Liberation Sans,sans-serif">C13</text>
<rect x="325.3" y="21.3" width="32.2" height="13.9" fill="none" stroke="#7a6a00" stroke-width="0.8"/>
<circle cx="329.3" cy="25" r="1.95" fill="#b0b0b6"/>
<circle cx="334.1" cy="25" r="1.95" fill="#b0b0b6"/>
<circle cx="339.1" cy="25" r="1.95" fill="#b0b0b6"/>
<circle cx="344" cy="25" r="1.95" fill="#b0b0b6"/>
<circle cx="349" cy="25" r="1.95" fill="#b0b0b6"/>
<circle cx="353.9" cy="25" r="1.95" fill="#b0b0b6"/>
<path d="M329 29 L329 34.5" stroke="#7a6a00" stroke-width="0.8" fill="none"/>
<path d="M334 29 L334 34.5" stroke="#7a6a00" stroke-width="0.8" fill="none"/>
<path d="M349 29 L349 34.5" stroke="#7a6a00" stroke-width="0.8" fill="none"/>
<path d="M354 29 L354 34.5" stroke="#7a6a00" stroke-width="0.8" fill="none"/>
<text x="358.2" y="26.6" font-size="5.1" fill="#6a5a00" font-weight="bold" font-family="Liberation Sans,sans-serif">E</text>
<rect x="369.4" y="44.5" width="24.3" height="11.9" fill="none" stroke="#7a6a00" stroke-width="0.8"/>
<circle cx="373.9" cy="51.5" r="2.15" fill="#b0b0b6"/>
<circle cx="379" cy="51.5" r="2.15" fill="#b0b0b6"/>
<circle cx="383.8" cy="51.5" r="2.15" fill="#b0b0b6"/>
<rect x="386.8" y="49.5" width="4.0" height="4.0" fill="#b0b0b6"/>
<path d="M373 55.9 L378 55.9" stroke="#10a020" stroke-width="1" fill="none"/>
<path d="M385 55.9 L390 55.9" stroke="#10a020" stroke-width="1" fill="none"/>
<text x="368.4" y="55.6" font-size="4.1" fill="#6a5a00" font-weight="bold" font-family="Liberation Sans,sans-serif" transform="rotate(-90 368.4 55.6)">J4</text>
<path d="M419.1 8 L432.4 8" stroke="#7a6a00" stroke-width="0.6" fill="none"/>
<path d="M419.1 17 L432.4 17" stroke="#7a6a00" stroke-width="0.6" fill="none"/>
<path d="M419.1 25.8 L432.4 25.8" stroke="#7a6a00" stroke-width="0.6" fill="none"/>
<path d="M432.4 -1 L432.4 25.8" stroke="#7a6a00" stroke-width="0.6" fill="none"/>
<path d="M419.1 8 L419.1 25.8" stroke="#7a6a00" stroke-width="0.6" fill="none"/>
<circle cx="419.1" cy="0.3" r="2.15" fill="#b0b0b6"/>
<circle cx="419.1" cy="8" r="2.15" fill="#b0b0b6"/>
<circle cx="419.1" cy="25.8" r="2.15" fill="#b0b0b6"/>
<rect x="417.0" y="14.9" width="4.2" height="4.2" fill="#b0b0b6"/>
<circle cx="432.4" cy="0.3" r="2.15" fill="#b0b0b6"/>
<circle cx="432.4" cy="8" r="2.15" fill="#b0b0b6"/>
<circle cx="432.4" cy="17" r="2.15" fill="#b0b0b6"/>
<circle cx="432.4" cy="25.8" r="2.15" fill="#b0b0b6"/>
<text x="418" y="14.2" font-size="4.3" fill="#6a5a00" font-weight="bold" font-family="Liberation Sans,sans-serif" transform="rotate(-90 418 14.2)">S2</text>
</svg>
<div class="t" style="left:203.5px;top:156.5px;font-size:10px;line-height:10px;color:#000;font-family:'Liberation Sans','Noto Sans CJK SC',sans-serif;font-weight:400">附录三：程序</div>
<div class="code" style="left:216px;top:177px">/**********************************</div>
<div class="code" style="left:216px;top:189px"><span class="cn">包含头文件</span></div>
<div class="code" style="left:216px;top:201px">**********************************/</div>
<div class="code" style="left:216px;top:214px">#include "main.h"</div>
<div class="code" style="left:216px;top:225.5px">#include "lcd1602.h"</div>
<div class="code" style="left:216px;top:237px">#include "key.h"</div>
<div class="code" style="left:216px;top:248.5px">#include "<i>adc</i>.h"</div>
<div class="code" style="left:216px;top:260px">#include "pm2_5.h"</div>
<div class="code" style="left:216px;top:272px">#include "dht11.h"</div>
<div class="code" style="left:216px;top:283.5px">#include "<i>uart</i>.h"</div>
<div class="code" style="left:216px;top:306px">/**********************************</div>
<div class="code" style="left:216px;top:318px"><span class="cn">变量定义</span></div>
<div class="code" style="left:216px;top:330px">**********************************/</div>
<div class="code" style="left:216px;top:343.3px"><i>uchar</i> key_<i>num</i> = 0;</div><div class="code" style="left:380px;top:343.3px">//<span class="cn">按键标志位</span></div>
<div class="code" style="left:216px;top:356.3px"><i>uchar</i> flag_display = 0;</div><div class="code" style="left:368px;top:356.3px">//<span class="cn">显示标志位</span></div>
<div class="code" style="left:216px;top:369.3px"><i>uint</i> time_<i>num</i> = 0;</div><div class="code" style="left:380px;top:369.3px">//<span class="cn">计时变量</span></div>
<div class="code" style="left:216px;top:382.3px"><i>uint</i> temp_value=200;</div><div class="code" style="left:403px;top:382.3px">//<span class="cn">温度变量</span></div>
<div class="code" style="left:216px;top:395.3px"><i>uint</i> temp_max=200;</div><div class="code" style="left:391px;top:395.3px">//<span class="cn">温度最大值</span></div>
<div class="code" style="left:216px;top:408.3px"><i>uint</i> <i>humi</i>_value=0;</div><div class="code" style="left:391px;top:408.3px">//<span class="cn">湿度变量</span></div>
<div class="code" style="left:216px;top:421.3px"><i>uint</i> <i>humi</i>_max=600;</div><div class="code" style="left:391px;top:421.3px">//<span class="cn">湿度最大值</span></div>
<div class="code" style="left:216px;top:434.3px"><i>uint</i> CO_value;</div><div class="code" style="left:379.5px;top:434.3px">//<span class="cn">一氧化碳变量</span></div>
<div class="code" style="left:216px;top:447.3px"><i>uint</i> CO_max=100;</div><div class="code" style="left:391px;top:447.3px">//<span class="cn">一氧化碳最大</span></div>
<div class="abs" style="left:205.2px;top:461px;width:2.6px;height:1.2px;background:#222"></div>
<div class="code" style="left:558px;top:155px"><i>uchar</i> <i>uart</i>_sent_<i>humi</i> = 0;</div><div class="code" style="left:745px;top:155px">//<span class="cn">温 度 语 音</span></div>
<div class="code" style="left:558px;top:167.5px"><span class="cn">标志位</span></div>
<div class="code" style="left:558px;top:180.5px"><i>uchar</i> <i>uart</i>_sent_CO = 0;</div><div class="code" style="left:733px;top:180.5px">//CO <span class="cn">语 音 播 报</span></div>
<div class="code" style="left:558px;top:193px"><span class="cn">位</span></div>
<div class="code" style="left:558px;top:206.5px"><i>uchar</i> <i>uart</i>_sent_PM = 0;</div><div class="code" style="left:733px;top:206.5px">//PM2.5 <span class="cn">语 音 播</span></div>
<div class="code" style="left:558px;top:219.5px"><span class="cn">志位</span></div>
<div class="code" style="left:558px;top:232px">***********************************</div>
<div class="code" style="left:558px;top:244.5px"><span class="cn">函数声明</span></div>
<div class="code" style="left:558px;top:256.5px">***********************************/</div>
<div class="code" style="left:558px;top:269.5px">void Delay_function(<i>uint</i> x);</div><div class="code" style="left:686px;top:269.5px">//<span class="cn">延时函数</span></div>
<div class="code" style="left:558px;top:282.5px">void Key_function(void);</div><div class="code" style="left:697px;top:282.5px">//<span class="cn">按键函数</span></div>
<div class="code" style="left:558px;top:295.5px">void Monitor_function(void);</div><div class="code" style="left:686px;top:295.5px">//<span class="cn">监测函数</span></div>
<div class="code" style="left:558px;top:308.5px">void Display_function(void);</div><div class="code" style="left:686px;top:308.5px">//<span class="cn">显示函数</span></div>
<div class="code" style="left:558px;top:321.5px">void Manage_function(void);</div><div class="code" style="left:697px;top:321.5px">//<span class="cn">处理函数</span></div>
<div class="code" style="left:558px;top:357px">/****</div>
<div class="code" style="left:558px;top:370px">*******</div><div class="code" style="left:592px;top:370px"><span class="cn">主函数</span></div>
<div class="code" style="left:558px;top:382px">*****/</div>
<div class="code" style="left:558px;top:394px">void main()</div>
<div class="code" style="left:558px;top:406px">{</div>
<div class="code" style="left:568px;top:417.5px">Lcd1602_<i>Init</i>();</div><div class="code" style="left:732px;top:417.5px">//LCD1602</div>
<div class="code" style="left:545px;top:430.5px"><span class="cn">始化</span></div>
<div class="code" style="left:568px;top:444px">Delay_function(50);</div><div class="code" style="left:721px;top:444px">//<span class="cn">延时</span> 50ms</div>
<div class="code" style="left:568px;top:456.5px">lcd1602_clean();</div><div class="code" style="left:721px;top:456.5px">//<span class="cn">清屏</span></div>
<div class="code" style="left:771px;top:417.5px"><span class="cn">初</span></div>
<div class="abs" style="left:982.5px;top:320px;width:5px;height:24px;border-radius:2.5px;background:#cfcfcf"></div>
<svg style="left:982.5px;top:5px" width="5" height="5" viewBox="0 0 5 5"><path d="M0.8 0.6 H4.2 M1 1.8 L2.5 3 L4 1.8 M1 3.2 L2.5 4.4 L4 3.2" stroke="#333" stroke-width="0.85" fill="none"/></svg>
<svg style="left:983px;top:15.5px" width="4" height="3" viewBox="0 0 4 3"><path d="M0.2 2.7 L2 0.3 L3.8 2.7Z" fill="#444"/></svg>
<svg style="left:982.8px;top:424.5px" width="4" height="3" viewBox="0 0 4 3"><path d="M0.2 0.3 L2 2.7 L3.8 0.3Z" fill="#444"/></svg>
<svg style="left:982.5px;top:433.5px" width="5" height="5" viewBox="0 0 5 5"><path d="M1 2 L2.5 0.6 L4 2 M1 3.6 L2.5 2.2 L4 3.6 M0.8 4.6 H4.2" stroke="#333" stroke-width="0.85" fill="none"/></svg>
<svg style="left:983px;top:443.0px" width="4.4" height="4.4" viewBox="0 0 4.4 4.4"><rect x="0.5" y="0.5" width="3.4" height="3.4" rx="0.9" fill="none" stroke="#444" stroke-width="0.75"/></svg>
<svg style="left:982.5px;top:452px" width="5" height="5" viewBox="0 0 5 5"><path d="M1 1 L2.5 2.4 L4 1 M1 2.6 L2.5 4 L4 2.6 M0.8 0.4 H4.2" stroke="#333" stroke-width="0.85" fill="none"/></svg>
</div>
<div id="side">
<div class="abs" style="left:11.8px;top:14px;width:8px;height:1px;background:#555"></div>
<svg style="left:10.3px;top:26.3px" width="11" height="11" viewBox="0 0 10 10"><path d="M1.2 6.6 L6.4 1.2 L7.8 2.6 L2.6 7.4 L1 7.6Z M5.6 2 L7 3.4" fill="none" stroke="#333" stroke-width="0.75" stroke-linejoin="round"/><path d="M0.6 9.2 H9" stroke="#333" stroke-width="0.75"/></svg>
<div class="sl" style="top:38.3px">样式</div>
<svg style="left:10.3px;top:57.4px" width="11" height="11" viewBox="0 0 10 10"><path d="M1.4 1.2 L8.8 3.8 L6 5.2 L8.4 8 L7 9.2 L4.6 6.4 L3.2 8.8Z" fill="none" stroke="#333" stroke-width="0.75" stroke-linejoin="round"/></svg>
<div class="sl" style="top:69.4px">选择</div>
<svg style="left:10.3px;top:88.5px" width="11" height="11" viewBox="0 0 10 10"><circle cx="3" cy="2.6" r="1.5" fill="none" stroke="#333" stroke-width="0.75"/><path d="M4.8 2.6 H9.4" stroke="#333" stroke-width="0.75"/><circle cx="7" cy="7.4" r="1.5" fill="none" stroke="#333" stroke-width="0.75"/><path d="M0.6 7.4 H5.2" stroke="#333" stroke-width="0.75"/></svg>
<div class="sl" style="top:100.5px">属性</div>
<svg style="left:10.3px;top:119.5px" width="11" height="11" viewBox="0 0 10 10"><path d="M1.4 8.8 Q0.6 8.8 0.6 8 V2 Q0.6 1.2 1.4 1.2 H8.4 Q9.4 1.2 9.4 2.2 V6 Q9.4 8.8 7 8.8 Z" fill="none" stroke="#333" stroke-width="0.75"/><path d="M4 4 Q4 7 5.4 7 Q6.8 7 7.4 3.6 M2.6 5.2 Q3.2 7.4 5 7.2" fill="none" stroke="#333" stroke-width="0.7"/></svg>
<div class="sl" style="top:131.5px">素材</div>
<svg style="left:10.3px;top:150.5px" width="11" height="11" viewBox="0 0 10 10"><path d="M1 9 L5.2 4.8 M4.4 3.2 L6.8 5.6 M2.4 1.4 L3 2.8 L4.4 3.2 L3 3.6 L2.6 5 L2.2 3.6 L0.8 3.2 L2.2 2.8Z" fill="none" stroke="#333" stroke-width="0.7" stroke-linejoin="round"/><path d="M6.2 1 L8.8 3.6 M8.8 1 L6.2 3.6 M7.4 6.6 L9 8.2" stroke="#333" stroke-width="0.7"/></svg>
<div class="sl" style="top:162.5px">美化</div>
<svg style="left:10.3px;top:181.5px" width="11" height="11" viewBox="0 0 10 10"><circle cx="5" cy="5" r="4.2" fill="none" stroke="#333" stroke-width="0.75"/><path d="M3.6 4 Q3.6 2.6 5 2.6 Q6.4 2.6 6.4 3.8 Q6.4 4.6 5 5.4 V6.2" fill="none" stroke="#333" stroke-width="0.75"/><circle cx="5" cy="7.4" r="0.5" fill="#333"/></svg>
<div class="sl" style="top:193.5px">帮助</div>
<svg style="left:10.3px;top:213.0px" width="11" height="11" viewBox="0 0 10 10"><path d="M2.2 1.6 Q0.8 1.6 0.8 3 V4 M7.8 8.6 Q9.2 8.6 9.2 7.2 V6.2 M0 3.2 L0.8 4.2 L1.6 3.2 M8.4 7 L9.2 6 L10 7" fill="none" stroke="#333" stroke-width="0.7"/><path d="M4.8 4.4 L6.4 0.8 L8 4.4 M5.4 3.2 H7.4" fill="none" stroke="#333" stroke-width="0.7"/><path d="M1.6 5.8 H4.8 M3.2 5.2 V5.8 M2 6.2 Q3 8.6 4.8 9.2 M4.4 6.2 Q3.6 8.4 1.6 9.2" fill="none" stroke="#333" stroke-width="0.6"/></svg>
<div class="sl" style="top:225.0px">翻译</div>
<svg style="left:10.3px;top:244.1px" width="11" height="11" viewBox="0 0 10 10"><path d="M3.4 1 Q5 2.4 6.6 1 L9.4 2.8 L8.2 4.8 L7.4 4.4 V9 H2.6 V4.4 L1.8 4.8 L0.6 2.8Z" fill="none" stroke="#333" stroke-width="0.75" stroke-linejoin="round"/><circle cx="6.6" cy="6.6" r="1.8" fill="#e3e3e3" stroke="#333" stroke-width="0.65"/></svg>
<div class="sl" style="top:256.1px">模板</div>
<div class="sl" style="top:275.5px;font-size:7px;letter-spacing:1.7px;text-indent:1.7px;color:#444">•••</div>
<div class="sl" style="top:287.5px">设置</div>
</div>
<div id="ime">
<div class="abs" style="left:925.6px;top:452.9px;width:84.8px;height:16px;background:#fff;border-radius:1px"></div>
<svg style="left:928px;top:454px" width="13" height="13" viewBox="0 0 13 13"><circle cx="6.5" cy="6.5" r="5.6" fill="none" stroke="#4a6df0" stroke-width="1.2"/><text x="6.5" y="8" font-size="4.2" font-weight="bold" font-style="italic" fill="#4a6df0" text-anchor="middle" font-family="Liberation Sans,sans-serif">iFLY</text></svg>
<div class="t" style="left:948.8px;top:456.3px;font-size:9.4px;font-weight:bold;color:#4a6df0">中</div>
<svg style="left:965px;top:456.5px" width="9" height="10" viewBox="0 0 9 10"><circle cx="2.5" cy="2.2" r="1.3" fill="none" stroke="#4a6df0" stroke-width="1"/><path d="M6.7 5 Q7.8 5 7.8 6.3 Q7.8 8 6 8.8 Q6.7 7.7 6.2 7.2 Q5.6 7 5.6 6.1 Q5.6 5 6.7 5Z" fill="#4a6df0"/></svg>
<svg style="left:981.5px;top:456px" width="8" height="11" viewBox="0 0 8 11"><rect x="2.3" y="0.6" width="3.4" height="6" rx="1.7" fill="#4a6df0"/><path d="M0.8 4.6 Q0.8 8 4 8 Q7.2 8 7.2 4.6 M4 8 V10" fill="none" stroke="#4a6df0" stroke-width="1"/></svg>
<svg style="left:997px;top:456.8px" width="10" height="10" viewBox="0 0 10 10"><rect x="0.2" y="0.6" width="3.8" height="3.8" rx="0.4" fill="#4a6df0"/><rect x="0.2" y="5.2" width="3.8" height="3.8" rx="0.4" fill="#4a6df0"/><rect x="4.9" y="5.2" width="3.8" height="3.8" rx="0.4" fill="#4a6df0"/><path d="M6.8 0.2 L9.1 2.5 L6.8 4.8 L4.5 2.5Z" fill="#4a6df0"/></svg>
<div class="abs" style="left:1010.5px;top:450.8px;width:20px;height:19.2px;border-radius:6px;background:linear-gradient(90deg,#5c9bf8,#2f7af5 70%)"></div>
<svg style="left:1014.8px;top:456.8px" width="6" height="9" viewBox="0 0 6 9"><path d="M4.6 1 L1.4 4.5 L4.6 8" stroke="#fff" stroke-width="1.3" fill="none" stroke-linecap="round" stroke-linejoin="round"/></svg>
</div>
<div id="status">
<div class="st" style="left:8.6px;letter-spacing:0.45px">页面: 41/54</div>
<div class="abs" style="left:56.5px;top:2.6px;width:1px;height:9px;background:#d0d0d0"></div>
<div class="st" style="left:63.7px">字数: 17121</div>
<div class="abs" style="left:110.5px;top:2.6px;width:1px;height:9px;background:#d0d0d0"></div>
<div class="st" style="left:118px">拼写检查: 打开</div>
<svg style="left:168.5px;top:5.6px" width="4.4" height="3" viewBox="0 0 4.4 3"><path d="M0.5 0.5 L2.2 2.2 L3.9 0.5" stroke="#333" stroke-width="0.9" fill="none"/></svg>
<div class="abs" style="left:180.5px;top:2.6px;width:1px;height:9px;background:#d0d0d0"></div>
<div class="st" style="left:188.7px">校对</div>
<div class="abs" style="left:211px;top:2.6px;width:1px;height:9px;background:#d0d0d0"></div>
<svg style="left:220.5px;top:3.1px" width="7" height="7" viewBox="0 0 7 7"><path d="M3.5 0.6 L6.6 6.2 H0.4Z" fill="#f5a623"/><path d="M3.5 2.6 V4.4 M3.5 5 V5.6" stroke="#fff" stroke-width="0.6"/></svg>
<div class="st" style="left:231.2px">缺失字体</div>
<svg style="left:710.5px;top:2.6px" width="11" height="8" viewBox="0 0 11 8"><path d="M0.6 4 Q5.5 -2 10.4 4 Q5.5 10 0.6 4Z" fill="none" stroke="#444" stroke-width="0.75"/><circle cx="5.5" cy="4" r="1.5" fill="none" stroke="#444" stroke-width="0.75"/></svg>
<div class="abs" style="left:729.5px;top:2.6px;width:1px;height:9px;background:#d0d0d0"></div>
<div class="abs" style="left:734.5px;top:0.1px;width:12.5px;height:13px;border-radius:2px;background:#d2d2d2"></div>
<svg style="left:736.5px;top:2.1px" width="8" height="9" viewBox="0 0 8 9"><rect x="0.6" y="0.5" width="6.8" height="8" rx="1" fill="none" stroke="#333" stroke-width="0.8"/><path d="M2 3 H6 M2 5 H4.6" stroke="#333" stroke-width="0.7"/></svg>
<svg style="left:754.5px;top:2.6px" width="10" height="8" viewBox="0 0 10 8"><path d="M0.4 0.6 H9.2 M3 2.9 H9.2 M3 5.2 H9.2 M0.4 7.5 H9.2" stroke="#444" stroke-width="0.75"/><circle cx="1" cy="2.9" r="0.5" fill="#444"/><circle cx="1" cy="5.2" r="0.5" fill="#444"/></svg>
<svg style="left:775px;top:2.1px" width="8" height="9" viewBox="0 0 8 9"><path d="M1 0.8 L7.2 4.5 L1 8.2Z" fill="none" stroke="#444" stroke-width="0.8" stroke-linejoin="round"/></svg>
<svg style="left:793px;top:2.1px" width="9" height="9" viewBox="0 0 9 9"><circle cx="4.5" cy="4.5" r="3.9" fill="none" stroke="#444" stroke-width="0.75"/><path d="M0.6 4.5 H8.4 M4.5 0.6 V8.4 M4.5 0.6 Q1.6 4.5 4.5 8.4 M4.5 0.6 Q7.4 4.5 4.5 8.4" fill="none" stroke="#444" stroke-width="0.6"/></svg>
<svg style="left:812.5px;top:2.1px" width="9" height="9" viewBox="0 0 9 9"><path d="M1 8 L1.6 5.6 L6 1.2 Q6.8 0.6 7.6 1.4 Q8.4 2.2 7.8 3 L3.4 7.4Z M5.4 1.8 L7.2 3.6" fill="none" stroke="#444" stroke-width="0.75" stroke-linejoin="round"/></svg>
<div class="abs" style="left:829.5px;top:2.6px;width:1px;height:9px;background:#d0d0d0"></div>
<svg style="left:837.5px;top:2.1px" width="9" height="9" viewBox="0 0 9 9"><path d="M0.6 2.6 V1.4 Q0.6 0.6 1.4 0.6 H2.6 M6.4 0.6 H7.6 Q8.4 0.6 8.4 1.4 V2.6 M8.4 6.4 V7.6 Q8.4 8.4 7.6 8.4 H6.4 M2.6 8.4 H1.4 Q0.6 8.4 0.6 7.6 V6.4" fill="none" stroke="#444" stroke-width="0.75"/><rect x="2.6" y="2.6" width="3.8" height="3.8" rx="0.6" fill="none" stroke="#444" stroke-width="0.75"/></svg>
<div class="st" style="left:860.5px;color:#444">70%</div>
<svg style="left:884.5px;top:5.6px" width="4.4" height="3" viewBox="0 0 4.4 3"><path d="M0.5 0.5 L2.2 2.2 L3.9 0.5" stroke="#333" stroke-width="0.9" fill="none"/></svg>
<div class="abs" style="left:899.5px;top:6.1px;width:6.5px;height:1.2px;background:#333"></div>
<div class="abs" style="left:915px;top:6.3px;width:63px;height:0.8px;background:#c4c4c4"></div>
<div class="abs" style="left:915px;top:6.1px;width:22px;height:1.2px;background:#3a7be8"></div>
<div class="abs" style="left:934.3px;top:3.9px;width:5.4px;height:5.4px;border-radius:50%;background:#fff;border:0.8px solid #999"></div>
<svg style="left:986.5px;top:3.1px" width="7" height="7" viewBox="0 0 7 7"><path d="M3.5 0.4 V6.6 M0.4 3.5 H6.6" stroke="#222" stroke-width="1.1"/></svg>
<svg style="left:1005.5px;top:2.1px" width="9" height="9" viewBox="0 0 9 9"><path d="M0.8 3 V0.8 H3 M6 0.8 H8.2 V3 M8.2 6 V8.2 H6 M3 8.2 H0.8 V6" fill="none" stroke="#444" stroke-width="0.75"/><path d="M0.9 0.9 L3 3 M8.1 0.9 L6 3 M8.1 8.1 L6 6 M0.9 8.1 L3 6" stroke="#444" stroke-width="0.6" stroke-dasharray="1.2 0.8"/></svg>
</div>
<div id="dlg">
<div class="abs" style="left:0;top:0;width:107px;height:14.5px;background:#fff"></div>
<svg style="left:1.6px;top:1.6px" width="9.6" height="9.6" viewBox="0 0 10 10"><rect width="10" height="10" rx="1" fill="#3a63f0"/><text x="5" y="7.7" font-size="7.4" font-weight="bold" fill="#fff" text-anchor="middle" font-family="Liberation Sans,sans-serif">W</text></svg>
<div class="t" style="left:12.8px;top:2.5px;font-size:7.2px;line-height:9px;color:#111">字数统计</div>
<svg style="left:95px;top:3.5px" width="7" height="7" viewBox="0 0 7 7"><path d="M0.3 0.3 L6.7 6.7 M6.7 0.3 L0.3 6.7" stroke="#333" stroke-width="0.7"/></svg>
<div class="t" style="left:2.8px;top:17.4px;font-size:7.2px;line-height:9px;color:#222">统计信息</div>
<div class="abs" style="left:33px;top:21.6px;width:72px;height:1px;background:#c8c8c8"></div>
<div class="dr" style="top:29.2px"><span>页数</span><b>54</b></div>
<div class="dr" style="top:40.4px"><span>字数</span><b>17121</b></div>
<div class="dr" style="top:51px"><span>字符数(不计空格)</span><b>24788</b></div>
<div class="dr" style="top:61.6px"><span>字符数(计空格)</span><b>27166</b></div>
<div class="dr" style="top:72.4px"><span>段落数</span><b>664</b></div>
<div class="dr" style="top:83.3px"><span>非中文单词</span><b>1611</b></div>
<div class="dr" style="top:94.1px"><span>中文字符</span><b>15510</b></div>
<div class="abs" style="left:3.8px;top:110px;width:7.6px;height:7.6px;background:#fff;border:0.8px solid #444"></div>
<div class="abs" style="left:13.5px;top:108.5px;width:90.5px;height:11px;border:1px dotted #8a8a8a"></div>
<div class="t" style="left:15px;top:109.6px;font-size:7.3px;line-height:9px;color:#111;letter-spacing:-0.15px">包括文本框、脚注和尾注(<u style="text-decoration-thickness:0.5px;text-underline-offset:0.5px">F</u>)</div>
<svg style="left:5px;top:126px" width="9" height="9" viewBox="0 0 9 9"><circle cx="4.5" cy="4.5" r="3.9" fill="none" stroke="#888" stroke-width="0.7"/><path d="M3.6 2.8 L6 4.5 L3.6 6.2Z" fill="none" stroke="#4a8cf0" stroke-width="0.7" stroke-linejoin="round"/></svg>
<div class="t" style="left:17.3px;top:126.2px;font-size:7.3px;line-height:9px;color:#4a8cf0">操作技巧</div>
<div class="abs" style="left:58.6px;top:122.2px;width:46.6px;height:17px;background:#e1e1e1;border:1px solid #2a7ad8"></div>
<div class="t" style="left:74.5px;top:126.2px;font-size:7.5px;line-height:9px;color:#111">关闭</div>
</div>
</body>
</html>
